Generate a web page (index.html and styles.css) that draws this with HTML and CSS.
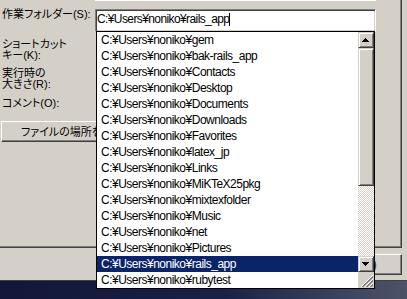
FILE: index.html
```html
<!DOCTYPE html>
<html lang="ja">
<head>
<meta charset="utf-8">
<link rel="stylesheet" href="styles.css">
</head>
<body>
<div class="screen">
  <div class="dialog">
    <div class="page">
      <div class="prev-edit"></div>
      <div class="row r1">
        <div class="label">作業フォルダー(S):</div>
        <div class="edit"><span class="edit-text">C:¥Users¥noniko¥rails_app</span><span class="caret"></span></div>
      </div>
      <div class="row r2"><div class="label"><div class="ln">ショートカット</div><div class="ln">キー(K):</div></div></div>
      <div class="row r3"><div class="label"><div class="ln">実行時の</div><div class="ln">大きさ(R):</div></div></div>
      <div class="row r4"><div class="label">コメント(O):</div></div>
      <div class="btnrow"><div class="btn open-btn">ファイルの場所を開く(F)</div></div>
    </div>
    <div class="buttons"><div class="btn apply-btn">適用(A)</div></div>
  </div>
  <div class="desktop"></div>

  <div class="dropdown">
    <div class="items">
      <div class="item">C:¥Users¥noniko¥gem</div>
      <div class="item">C:¥Users¥noniko¥bak-rails_app</div>
      <div class="item">C:¥Users¥noniko¥Contacts</div>
      <div class="item">C:¥Users¥noniko¥Desktop</div>
      <div class="item">C:¥Users¥noniko¥Documents</div>
      <div class="item">C:¥Users¥noniko¥Downloads</div>
      <div class="item">C:¥Users¥noniko¥Favorites</div>
      <div class="item">C:¥Users¥noniko¥latex_jp</div>
      <div class="item">C:¥Users¥noniko¥Links</div>
      <div class="item">C:¥Users¥noniko¥MiKTeX25pkg</div>
      <div class="item">C:¥Users¥noniko¥mixtexfolder</div>
      <div class="item">C:¥Users¥noniko¥Music</div>
      <div class="item">C:¥Users¥noniko¥net</div>
      <div class="item">C:¥Users¥noniko¥Pictures</div>
      <div class="item sel">C:¥Users¥noniko¥rails_app</div>
      <div class="item">C:¥Users¥noniko¥rubytest</div>
    </div>
    <div class="sb">
      <div class="sbtn"><svg width="14" height="14" viewBox="0 0 14 14"><rect x="6" y="5" width="1" height="1"/><rect x="5" y="6" width="3" height="1"/><rect x="4" y="7" width="5" height="1"/><rect x="3" y="8" width="7" height="1"/></svg></div>
      <div class="thumb"></div>
      <div class="track"></div>
      <div class="sbtn"><svg width="14" height="14" viewBox="0 0 14 14"><rect x="3" y="5" width="7" height="1"/><rect x="4" y="6" width="5" height="1"/><rect x="5" y="7" width="3" height="1"/><rect x="6" y="8" width="1" height="1"/></svg></div>
      <div class="grip"><svg width="16" height="16" viewBox="0 0 16 16"><path d="M15 3 L3 15 M15 7 L7 15 M15 11 L11 15" stroke="#fff" stroke-width="1" shape-rendering="crispEdges"/><path d="M15 4 L4 15 M15 5 L5 15 M15 8 L8 15 M15 9 L9 15 M15 12 L12 15 M15 13 L13 15" stroke="#808080" stroke-width="1" shape-rendering="crispEdges"/></svg></div>
    </div>
  </div>
</div>
</body>
</html>
```

FILE: styles.css
```css
html, body {
  margin: 0;
  padding: 0;
  background: #161b38;
}

.screen {
  position: relative;
  width: 407px;
  height: 299px;
  overflow: hidden;
  font-family: "Noto Sans CJK JP", sans-serif;
  color: #000;
}

.dialog {
  height: 281px;
  box-sizing: border-box;
  background: #d4d0c8;
  border-bottom: 1px solid #404040;
  display: flex;
  flex-direction: column;
}

.page {
  flex: none;
  width: 402px;
  height: 248px;
  box-sizing: border-box;
  border-right: 1px solid #404040;
  border-bottom: 1px solid #404040;
  box-shadow: inset -1px -1px #808080;
}

.prev-edit {
  margin-left: 95px;
  width: 281px;
  height: 1px;
  background: #fff;
}

.row {
  display: grid;
  grid-template-columns: 95px 281px;
  align-items: start;
}

.label {
  padding-left: 2px;
  font-family: "Liberation Sans", "Noto Sans CJK JP", sans-serif;
  font-size: 11px;
  line-height: 11px;
  font-feature-settings: "palt";
  white-space: nowrap;
}

.ln {
  height: 10.5px;
}

.r1 { margin-top: 8px; height: 23px; }
.r2 { margin-top: 7px; height: 22px; }
.r3 { margin-top: 7px; height: 22px; }
.r4 { margin-top: 8px; height: 11px; }

.edit {
  height: 23px;
  box-sizing: border-box;
  border: 1px solid;
  border-color: #808080 #fff #fff #808080;
  box-shadow: inset 1px 1px #404040, inset -1px -1px #d4d0c8;
  background: #fff;
  padding: 0 0 3px 1px;
  display: flex;
  align-items: center;
  font-family: "Liberation Sans", sans-serif;
  font-size: 12px;
  letter-spacing: -0.6px;
  white-space: nowrap;
}

.caret {
  display: inline-block;
  width: 1px;
  height: 13px;
  background: #000;
}

.btnrow {
  margin-top: 12px;
  padding-left: 1px;
}

.btn {
  box-sizing: border-box;
  border: 1px solid;
  border-color: #fff #404040 #404040 #fff;
  box-shadow: inset -1px -1px #808080;
  background: #d4d0c8;
  font-size: 11px;
  font-feature-settings: "palt";
  white-space: nowrap;
}

.open-btn {
  width: 130px;
  height: 21px;
  line-height: 19px;
  padding-left: 19px;
}

.buttons {
  display: flex;
  justify-content: flex-end;
  padding: 6px 5px 0 0;
}

.apply-btn {
  width: 75px;
  height: 21px;
  line-height: 19px;
  text-align: right;
  padding-right: 24px;
}

.desktop {
  height: 18px;
  background: linear-gradient(90deg, #12173a 0%, #1b2144 55%, #3d4460 85%, #4d5266 100%);
}

.dropdown {
  position: absolute;
  left: 96px;
  top: 31px;
  width: 279px;
  height: 258px;
  box-sizing: border-box;
  border: 1px solid #000;
  background: #fff;
  display: flex;
}

.items {
  width: 261px;
  display: flex;
  flex-direction: column;
}

.item {
  height: 16px;
  line-height: 16px;
  padding-left: 4px;
  font-family: "Liberation Sans", sans-serif;
  font-size: 12px;
  letter-spacing: -0.5px;
  white-space: nowrap;
  overflow: hidden;
}

.item.sel {
  background: #0a246a;
  color: #fff;
}

.sb {
  width: 16px;
  display: flex;
  flex-direction: column;
  background: #d4d0c8;
}

.sbtn, .thumb {
  box-sizing: border-box;
  border: 1px solid;
  border-color: #d4d0c8 #404040 #404040 #d4d0c8;
  box-shadow: inset 1px 1px #fff, inset -1px -1px #808080;
  background: #d4d0c8;
}

.sbtn {
  height: 16px;
}

.sbtn svg {
  display: block;
}

.thumb {
  height: 138px;
}

.track {
  flex: 1;
  background: repeating-conic-gradient(#d4d0c8 0 25%, #ffffff 0 50%) 0 0 / 2px 2px;
}

.grip {
  height: 16px;
  background: #d4d0c8;
}

.grip svg {
  display: block;
}
```
